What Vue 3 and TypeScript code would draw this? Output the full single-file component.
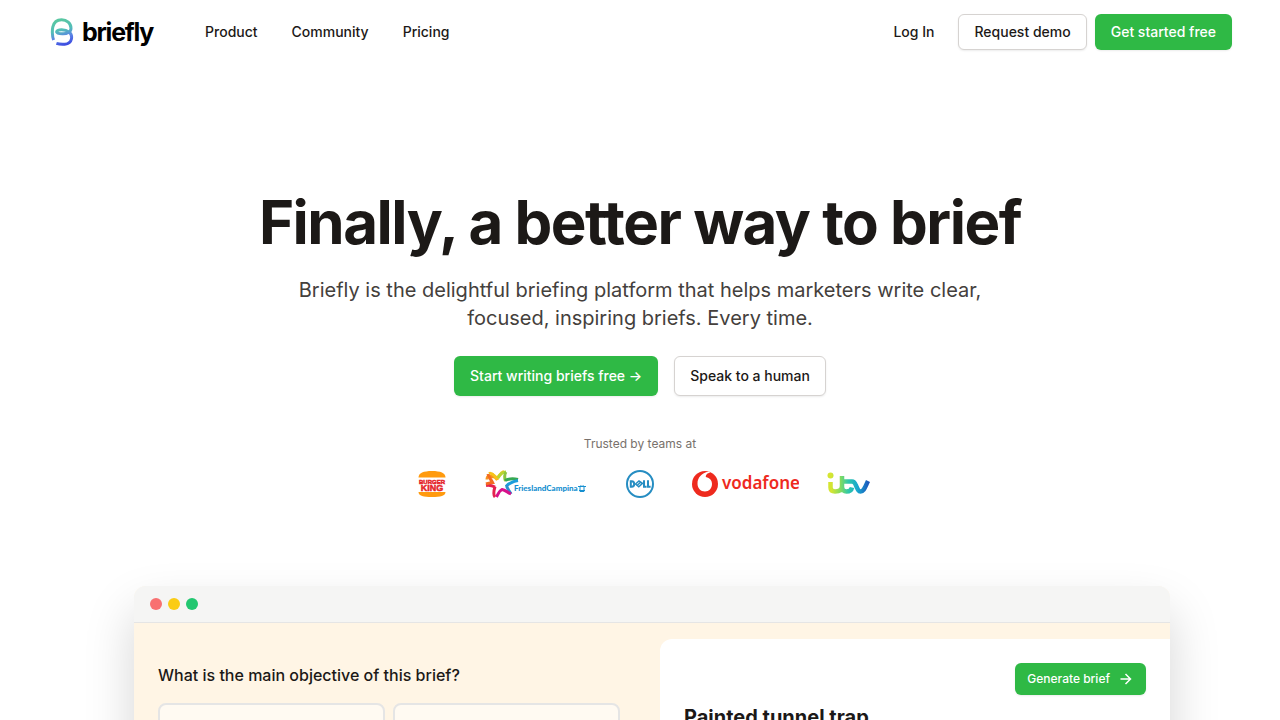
<script setup lang="ts">
interface NavLink {
  label: string
  href: string
}

const links: NavLink[] = [
  { label: 'Product', href: '#product' },
  { label: 'Community', href: '#community' },
  { label: 'Pricing', href: '#pricing' },
]

const lights: string[] = ['red', 'yellow', 'green']
</script>

<template>
  <div class="page">
    <header class="topbar">
      <a class="brand" href="#home" aria-label="briefly">
        <svg class="brand-mark" viewBox="0 0 24 28" fill="none" aria-hidden="true">
          <defs>
            <linearGradient id="mark" x1="6" y1="0" x2="14" y2="28" gradientUnits="userSpaceOnUse">
              <stop offset="0.1" stop-color="#58c7a2" />
              <stop offset="0.45" stop-color="#52bdb8" />
              <stop offset="0.7" stop-color="#5b83e6" />
              <stop offset="1" stop-color="#3a47e0" />
            </linearGradient>
          </defs>
          <path
            d="M3.600 22C2 18 2.200 11.500 2.800 9C3.900 4.400 7.200 1.800 11.600 1.800C16.800 1.800 21 5.400 21 10.200C21 14 17 16 12.400 15.800C8.200 15.600 6.200 14.800 6.800 13.400C7.800 11.200 15 11 19 14C23 17 22.800 25.600 14.800 26.200C11.800 26.400 9 26.200 6.400 25.400"
            stroke="url(#mark)"
            stroke-width="3"
          />
        </svg>
        <span class="brand-name">briefly</span>
      </a>
      <nav class="nav">
        <a v-for="link in links" :key="link.label" :href="link.href">{{ link.label }}</a>
      </nav>
      <div class="actions">
        <a class="login" href="#login">Log In</a>
        <button type="button" class="btn outline">Request demo</button>
        <button type="button" class="btn solid">Get started free</button>
      </div>
    </header>

    <main>
      <section class="hero">
        <h1>Finally, a better way to brief</h1>
        <p class="lead">
          Briefly is the delightful briefing platform that helps marketers write clear, focused,
          inspiring briefs. Every time.
        </p>
        <div class="cta">
          <button type="button" class="btn solid large">Start writing briefs free →</button>
          <button type="button" class="btn outline large">Speak to a human</button>
        </div>
        <p class="trusted">Trusted by teams at</p>
        <div class="logos">
          <svg width="46" height="28" viewBox="0 0 46 28" role="img" aria-label="Burger King">
            <path d="M13.500 7.500C13.500 3 18.500 1 27 1S40.500 3 40.500 7.500Z" fill="#ff9a0e" />
            <path d="M13.500 22H40.500C40.500 26 35.500 27 27 27S13.500 26 13.500 22Z" fill="#ff9a0e" />
            <text class="bk" x="27" y="13.500" font-size="6" text-anchor="middle">BURGER</text>
            <text class="bk" x="27" y="21" font-size="9" text-anchor="middle">KING</text>
          </svg>

          <svg width="110" height="28" viewBox="0 0 110 28" role="img" aria-label="FrieslandCampina">
            <g fill="none" stroke-width="3">
              <path d="M13 4L17.500 9L19.500 8" stroke="#f7b414" />
              <path d="M8 9.500C8 6 10 5.500 15 7" stroke="#f7941d" />
              <path d="M10 3.500C13 2 15 6 18 8C20 7 21 3 25 1.500" stroke="#f7c21a" />
              <path d="M19 8C21 4 23 2 27 2" stroke="#b9d532" />
              <path d="M27 2C25 5 25.500 8 26.500 11" stroke="#8cc63f" />
              <path d="M26 10.500C31 8 35 8.500 39 9.500" stroke="#36a852" />
              <path d="M39 10.500C34 11.500 30 13 27.500 16" stroke="#1c9ddb" />
              <path d="M27.500 15C27.500 18 30 20 32 24" stroke="#2a8fd0" />
              <path d="M32 24C28 22 26 20 23 19.500C20 21 19 24 17.500 27" stroke="#d6118a" />
              <path d="M16 27C14 25 15 20 16 16.500" stroke="#e4214f" />
              <path d="M7 15.500C10 15 13 15.500 16 17" stroke="#e4214f" />
              <path d="M7 14C10 13 12 12.500 13.500 12.500C12 9.500 9.500 7 9 4" stroke="#f36c21" />
            </g>
            <text class="friesland" x="35" y="21">FrieslandCampina</text>
            <path
              d="M99 16.500H107M100 20.500H106M101 17V21.500H105V17M101.500 15.500L103 16.500L104.500 15.500"
              fill="none"
              stroke="#168fd0"
            />
          </svg>

          <svg width="46" height="28" viewBox="0 0 46 28" role="img" aria-label="Dell">
            <circle cx="23" cy="14" r="13" fill="none" stroke="#268dc2" stroke-width="2" />
            <g fill="none" stroke="#268dc2" stroke-width="2">
              <path d="M13.800 11.200H14.800C18 11.200 18 16.800 14.800 16.800H13.800Z" />
              <path d="M18.500 14L22 11L25.500 13.300L21.800 16.800ZM20.500 15L24 12" stroke-width="1.500" />
              <path d="M27 10.200V16.800H29.600M31 10.200V16.800H33.600" />
            </g>
          </svg>

          <svg width="108" height="28" viewBox="0 0 108 28" role="img" aria-label="Vodafone">
            <circle cx="14" cy="14" r="13" fill="#ee2a1e" />
            <path
              d="M19.500 2.500C16 3 14.800 5 14.800 7C19 8 21 10.500 21 14C21 18.500 18 21.500 14 21.500C9.500 21.500 6.500 18 6.500 13.500C6.500 8 10.500 3 17.500 1.600Z"
              fill="#fff"
            />
            <text class="vodafone" x="31" y="19">vodafone</text>
          </svg>

          <svg width="48" height="28" viewBox="0 0 48 28" fill="none" role="img" aria-label="itv">
            <defs>
              <linearGradient id="itv" x1="0" y1="14" x2="44" y2="14" gradientUnits="userSpaceOnUse">
                <stop offset="0.1" stop-color="#d5e532" />
                <stop offset="0.3" stop-color="#86dc5d" />
                <stop offset="0.48" stop-color="#30c9a8" />
                <stop offset="0.7" stop-color="#18a6cf" />
                <stop offset="1" stop-color="#1d46b8" />
              </linearGradient>
            </defs>
            <circle cx="3.500" cy="5.500" r="3" fill="url(#itv)" />
            <path
              d="M3.500 12V17.500C3.500 20.500 5 21.500 8 21.500C12 21.500 15 20 15 16V6V17C15 20 17 21.500 19.500 21.500C22.500 21.500 24.500 20 25 17.500M15 11.500H25C27.500 11.500 28 13 29 15.500C30.500 19 31.500 21.500 33.500 21.500C37 21.500 38 17 41 11"
              stroke="url(#itv)"
              stroke-width="4.500"
            />
          </svg>
        </div>
      </section>

      <section class="preview">
        <div class="window">
          <div class="titlebar">
            <span v-for="light in lights" :key="light" class="light" :class="light"></span>
          </div>
          <div class="workspace">
            <div class="question">
              <h2>What is the main objective of this brief?</h2>
              <div class="choices">
                <div class="choice"></div>
                <div class="choice"></div>
              </div>
            </div>
            <article class="document">
              <button type="button" class="btn solid small">
                Generate brief
                <svg width="16" height="16" viewBox="0 0 16 16" fill="none" aria-hidden="true">
                  <path d="M2.500 8H12.500M7.500 3L12.500 8L7.500 13" stroke="currentColor" stroke-width="1.500" />
                </svg>
              </button>
              <h3>Painted tunnel trap</h3>
            </article>
          </div>
        </div>
      </section>
    </main>
  </div>
</template>

<style>
body {
  margin: 0;
  background: #fff;
}
</style>

<style scoped>
.page {
  font-family: Inter, 'Liberation Sans', sans-serif;
  font-size: 14px;
  line-height: 20px;
  color: #1c1917;
}

h1,
h2,
h3,
p {
  margin: 0;
}

a {
  color: inherit;
  text-decoration: none;
}

.topbar {
  display: flex;
  align-items: center;
  height: 64px;
  padding: 0 48px;
  font-weight: 500;
}

.brand {
  display: flex;
  align-items: center;
  gap: 8px;
  padding-left: 2px;
}

.brand-mark {
  width: 24px;
  height: 28px;
}

.brand-name {
  font-size: 25px;
  line-height: 28px;
  font-weight: 700;
  letter-spacing: -0.05em;
  color: #000;
}

.nav {
  display: flex;
  gap: 34px;
  margin-left: 52px;
}

.actions {
  display: flex;
  align-items: center;
  gap: 8px;
  margin-left: auto;
}

.login {
  padding: 0 16px;
}

.btn {
  box-sizing: border-box;
  display: inline-flex;
  align-items: center;
  justify-content: center;
  height: 36px;
  padding: 0 16px;
  border: 0;
  border-radius: 6px;
  font: inherit;
  font-weight: 500;
  white-space: nowrap;
  cursor: pointer;
  box-shadow: 0 1px 2px rgba(0, 0, 0, 0.08);
}

.solid {
  color: #fff;
  background: #2fb945;
}

.outline {
  padding: 0 15px;
  color: #1c1917;
  background: #fff;
  border: 1px solid #d6d3d1;
}

.large {
  height: 40px;
}

.small {
  height: 32px;
  gap: 8px;
  padding: 0 12px;
  font-size: 12px;
}

.hero {
  display: flex;
  flex-direction: column;
  align-items: center;
  padding: 128px 24px 0;
  text-align: center;
}

h1 {
  font-size: 60px;
  line-height: 60px;
  font-weight: 700;
  letter-spacing: -0.025em;
}

.lead {
  max-width: 720px;
  margin-top: 24px;
  font-size: 20px;
  line-height: 28px;
  color: #44403c;
}

.cta {
  display: flex;
  gap: 16px;
  margin-top: 24px;
}

.trusted {
  margin-top: 40px;
  font-size: 12px;
  line-height: 16px;
  color: #78716c;
}

.logos {
  display: flex;
  flex-wrap: wrap;
  justify-content: center;
  gap: 28px;
  margin-top: 18px;
}

.bk {
  font-family: 'Liberation Sans', sans-serif;
  font-weight: 700;
  fill: #e5262a;
  stroke: #e5262a;
  stroke-width: 0.5px;
}

.friesland {
  font-family: Lato, sans-serif;
  font-size: 8px;
  font-weight: 900;
  fill: #168fd0;
}

.vodafone {
  font-family: 'Noto Sans', sans-serif;
  font-size: 17px;
  font-weight: 600;
  fill: #ee2a1e;
}

.preview {
  box-sizing: border-box;
  max-width: 1060px;
  margin: 88px auto 0;
  padding-left: 24px;
}

.window {
  overflow: hidden;
  border-radius: 12px;
  background: #fff5e5;
  box-shadow: 0 25px 50px rgba(0, 0, 0, 0.17);
}

.titlebar {
  display: flex;
  align-items: center;
  gap: 6px;
  height: 36px;
  padding: 0 16px;
  background: #f5f5f4;
  border-bottom: 1px solid #e5e5e5;
}

.light {
  width: 12px;
  height: 12px;
  border-radius: 50%;
}

.red {
  background: #f87171;
}

.yellow {
  background: #facc15;
}

.green {
  background: #22c770;
}

.workspace {
  display: grid;
  grid-template-columns: 526fr 510fr;
  padding-top: 16px;
}

.question {
  padding: 24px 40px 24px 24px;
}

h2 {
  font-size: 16px;
  line-height: 24px;
  font-weight: 500;
}

.choices {
  display: grid;
  grid-template-columns: 1fr 1fr;
  gap: 8px;
  margin-top: 16px;
}

.choice {
  min-height: 96px;
  border: 2px solid #e5e5e5;
  border-radius: 8px;
  background: #fffaf2;
}

.document {
  display: flex;
  flex-direction: column;
  padding: 24px;
  border-top-left-radius: 12px;
  background: #fff;
}

.document .btn {
  align-self: flex-end;
}

h3 {
  margin-top: 8px;
  font-size: 20px;
  line-height: 28px;
  font-weight: 700;
}
</style>
